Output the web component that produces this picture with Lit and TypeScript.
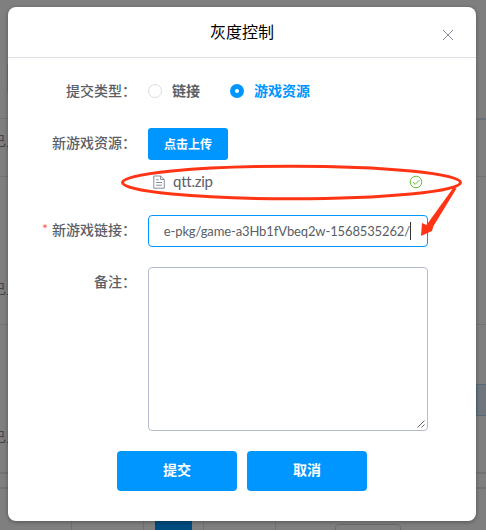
import { LitElement, html, css, svg } from "lit";
import { customElement, property, state } from "lit/decorators.js";
import { classMap } from "lit/directives/class-map.js";

@customElement("form-row")
class FormRow extends LitElement {
  @property() label = "";
  @property({ type: Boolean }) required = false;

  static styles = css`
    :host {
      display: grid;
      grid-template-columns: 140px 280px;
    }
    .label {
      display: flex;
      justify-content: flex-end;
      align-items: center;
      height: 28px;
      padding-right: 12px;
      font-family: "Noto Sans CJK SC", sans-serif;
      font-size: 14px;
      font-weight: 500;
      line-height: 20px;
      text-spacing-trim: space-all;
      color: #5a5e66;
      white-space: nowrap;
    }
    .star {
      margin-right: 4px;
      font-family: Lato, sans-serif;
      font-weight: 400;
      color: #fa5555;
    }
  `;

  render() {
    return html`
      <div class="label" lang="zh-CN">
        ${this.required ? html`<span class="star">*</span>` : null}<span>${this.label}：</span>
      </div>
      <div><slot></slot></div>
    `;
  }
}

@customElement("page-behind")
class PageBehind extends LitElement {
  static styles = css`
    :host {
      position: absolute;
      inset: 0;
      overflow: hidden;
      background: #7f7f7f;
    }
    svg {
      display: block;
    }
    text {
      font: 14px "Noto Sans CJK SC", sans-serif;
      fill: #40444b;
    }
  `;

  render() {
    return html`<svg width="486" height="530" viewBox="0 0 486 530">
      <g fill="#707274">
        <rect x="7" y="64" width="1" height="28" />
        <rect y="118" width="8" height="1" />
        <rect x="476" y="118.500" width="10" height="1" fill="#56697a" />
        ${[176, 324].map((y) => svg`<rect y=${y} width="486" height="1" />`)}
        ${[472, 487].map((y) => svg`<rect y=${y} width="486" height="2" />`)}
        ${[71, 143, 203, 275].map((x) => svg`<rect x=${x} y="488" width="1" height="42" />`)}
      </g>
      <rect x="476.500" y="384.500" width="12" height="31" fill="#70757d" stroke="#56697a" />
      <rect x="155" y="500" width="37" height="30" fill="#004b7f" />
      <rect x="335.500" y="524.500" width="65" height="20" rx="3" fill="none" stroke="#696b6f" />
      ${[146, 294, 442].map((y) => svg`<text x="-8" y=${y}>已上</text>`)}
    </svg>`;
  }
}

@customElement("app-root")
class AppRoot extends LitElement {
  @state() private type = "游戏资源";

  static styles = css`
    :host {
      display: block;
      position: relative;
      box-sizing: border-box;
      width: 486px;
      height: 530px;
      padding: 7px 10px 9px 8px;
      overflow: hidden;
      font-family: Lato, "Noto Sans CJK SC", sans-serif;
    }
    .dialog {
      position: relative;
      box-sizing: border-box;
      height: 514px;
      border-radius: 8px;
      background: #fff;
      box-shadow: 0 1px 4px rgba(0, 0, 0, 0.35);
    }
    .header {
      display: grid;
      grid-template-columns: 1fr auto 1fr;
      height: 50px;
      border-bottom: 1px solid #dfe2e9;
    }
    .title {
      grid-column: 2;
      font-size: 16px;
      line-height: 50px;
      color: #000;
    }
    .close {
      justify-self: end;
      width: 12px;
      height: 12px;
      margin: 22px 22px 0 0;
    }
    .types {
      display: flex;
      align-items: center;
      gap: 30px;
      height: 30px;
    }
    .radio {
      display: flex;
      align-items: center;
      gap: 10px;
      font-size: 14px;
      font-weight: 600;
      line-height: 20px;
      color: #5a5e66;
    }
    .dot {
      box-sizing: border-box;
      width: 14px;
      height: 14px;
      border: 1px solid #d8dce5;
      border-radius: 50%;
    }
    .radio.on {
      color: #0096ff;
      font-weight: 700;
    }
    .on .dot {
      border: 5px solid #0096ff;
    }
    .form {
      display: flex;
      flex-direction: column;
      padding-top: 18px;
    }
    .resource {
      margin-top: 22px;
    }
    .link,
    .remark {
      margin-top: 20px;
    }
    button {
      display: block;
      border: 0;
      padding: 0;
      border-radius: 4px;
      background: #0096ff;
      color: #fff;
      font: bold 14px/20px "Noto Sans CJK SC", sans-serif;
    }
    .upload {
      width: 80px;
      height: 32px;
      border-radius: 3px;
      font-size: 12px;
    }
    .file {
      display: flex;
      align-items: center;
      height: 25px;
      margin: 9px 0 1px;
      padding: 0 5px;
      font-size: 15px;
      line-height: 25px;
      color: #5a5e66;
    }
    .name {
      flex: 1;
      margin-left: 8px;
      letter-spacing: -0.25px;
    }
    .input {
      box-sizing: border-box;
      display: flex;
      justify-content: flex-end;
      align-items: center;
      height: 32px;
      padding: 0 16px 0 15px;
      border: 1px solid #0096ff;
      border-radius: 4px;
      font-size: 13px;
      letter-spacing: -0.13px;
      color: #5a5e66;
      white-space: nowrap;
    }
    .url {
      padding-bottom: 1px;
    }
    .caret {
      flex: none;
      width: 1px;
      height: 18px;
      background: #333;
    }
    .area {
      box-sizing: border-box;
      display: flex;
      justify-content: flex-end;
      align-items: flex-end;
      height: 164px;
      padding: 1px;
      border: 1px solid #b4bccc;
      border-radius: 4px;
    }
    .actions {
      display: flex;
      justify-content: center;
      gap: 10px;
      margin-top: 20px;
    }
    .actions button {
      width: 120px;
      height: 40px;
      padding-bottom: 4px;
    }
    .note {
      position: absolute;
      left: 0;
      top: 0;
      pointer-events: none;
    }
  `;

  private radio(name: string) {
    return html`<div class=${classMap({ radio: true, on: this.type === name })} @click=${() => (this.type = name)}>
      <span class="dot"></span><span>${name}</span>
    </div>`;
  }

  render() {
    return html`
      <page-behind></page-behind>
      <div class="dialog">
        <div class="header">
          <div class="title">灰度控制</div>
          <svg class="close" viewBox="0 0 12 12" stroke="#878d99" fill="none">
            <path d="M1 1L11 11M11 1L1 11" />
          </svg>
        </div>
        <div class="form">
          <form-row label="提交类型"><div class="types">${["链接", "游戏资源"].map((n) => this.radio(n))}</div></form-row>
          <form-row class="resource" label="新游戏资源">
            <button class="upload">点击上传</button>
            <div class="file">
              <svg width="12" height="14" viewBox="0 0 12 14" fill="none" stroke="#878d99">
                <path d="M0.800 1H7.500L11.300 4.500V13.200H0.800ZM7.500 1V4.500H11.300M3.200 4.700H5.700M3.200 7.500H9M3.200 10.200H9" />
              </svg>
              <span class="name">qtt.zip</span>
              <svg width="14" height="14" viewBox="0 0 14 14" fill="none" stroke="#67c23a">
                <circle cx="7" cy="7" r="5.800" />
                <path d="M3.800 7L6.200 9.300L10.700 4.800" />
              </svg>
            </div>
          </form-row>
          <form-row class="link" label="新游戏链接" required>
            <div class="input"><span class="url">e-pkg/game-a3Hb1fVbeq2w-1568535262/</span><span class="caret"></span></div>
          </form-row>
          <form-row class="remark" label="备注">
            <div class="area">
              <svg width="9" height="9" viewBox="0 0 9 9" stroke="#555" stroke-width="0.900">
                <path d="M0.500 7.500L7.500 0.500M4.500 7.500L7.500 4.500" />
              </svg>
            </div>
          </form-row>
        </div>
        <div class="actions"><button>提交</button><button>取消</button></div>
      </div>
      <svg class="note" width="486" height="530" viewBox="0 0 486 530">
        <ellipse cx="291.500" cy="182.500" rx="169" ry="16.300" fill="none" stroke="#ff3415" stroke-width="3" />
        <path d="M453.500 187.500L456.500 188.500L433.500 226L432 231L421 236L422 223L426.500 225Z" fill="#ff3415" />
      </svg>
    `;
  }
}
